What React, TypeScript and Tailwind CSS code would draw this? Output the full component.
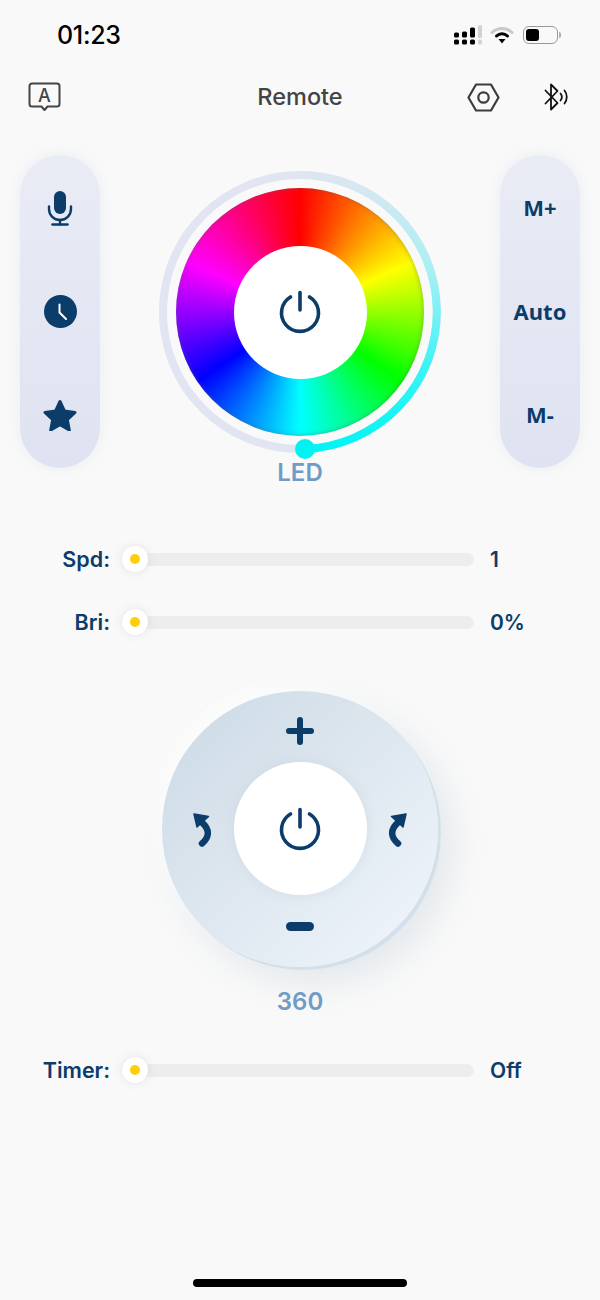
const NAVY = '#0b3c6a'

function PowerIcon() {
  return (
    <svg width="44" height="44" viewBox="0 0 44 44" fill="none" stroke={NAVY} strokeWidth="3.6" strokeLinecap="round">
      <path d="M12.500 7A18.500 18.500 0 1 0 31.500 7" />
      <path d="M22 2.500v17.500" />
    </svg>
  )
}

function SliderRow({ label, value }: { label: string; value: string }) {
  return (
    <div className="flex h-[26px] items-center">
      <span className="w-[110px] pt-[1px] text-right text-[21.5px] font-semibold text-[#0b3c6a]">{label}</span>
      <div className="relative z-10 ml-3 flex h-[26px] w-[26px] items-center justify-center rounded-full bg-white shadow-[0_0_8px_rgba(120,130,150,0.18)]">
        <div className="h-[10px] w-[10px] rounded-full bg-[#ffcf0a]" />
      </div>
      <div className="-ml-[13px] h-[13px] w-[339px] rounded-full bg-[#ebedee]" />
      <span className="ml-4 pt-[1px] text-[21px] font-semibold text-[#0b3c6a]">{value}</span>
    </div>
  )
}

function StatusIcons() {
  return (
    <div className="mr-[39px] flex items-center">
      <svg width="29" height="20" viewBox="0 0 29 20" fill="#000">
        <rect x="0" y="14.5" width="5" height="5" rx="1.6" />
        <rect x="8" y="14.5" width="5" height="5" rx="1.6" />
        <rect x="16" y="14.5" width="5" height="5" rx="1.6" />
        <rect x="0" y="7.5" width="5" height="5" rx="1.6" />
        <rect x="8" y="6.5" width="5" height="6" rx="1.6" />
        <rect x="16" y="2.5" width="5" height="10" rx="1.6" />
        <rect x="24" y="0" width="4" height="13" rx="1.6" fill="#d2d2d2" />
        <rect x="24" y="14.5" width="4" height="5" rx="1.6" fill="#d2d2d2" />
      </svg>
      <svg className="ml-[7px]" width="24" height="18" viewBox="0 0 24 18" fill="none" strokeLinecap="round">
        <path d="M2 6.5C7.5 1 16.5 1 22 6.5" stroke="#c9c9c9" strokeWidth="3" />
        <path d="M6.5 10C9.6 7 14.4 7 17.5 10" stroke="#000" strokeWidth="3" />
        <path d="M8.5 13h7L12 17.5z" fill="#000" />
      </svg>
      <div className="ml-[9px] flex items-center">
        <div className="flex h-[18px] w-[35px] items-center rounded-[6px] border border-[#9a9a9a] p-[2px]">
          <div className="h-full w-[13px] rounded-[3px] bg-black" />
        </div>
        <div className="ml-[1px] h-[6px] w-[2px] rounded-r-full bg-[#b0b0b0]" />
      </div>
    </div>
  )
}

function MessageIcon() {
  return (
    <svg width="33" height="30" viewBox="0 0 33 30" fill="none" stroke="#444" strokeWidth="2" strokeLinejoin="round" strokeLinecap="round">
      <path d="M4 1.5h25a2.5 2.5 0 0 1 2.5 2.5v18a2.5 2.5 0 0 1-2.5 2.5h-9.5l-3 3.5-3-3.5H4A2.5 2.5 0 0 1 1.5 22V4A2.5 2.5 0 0 1 4 1.5z" />
      <text x="16.5" y="19.5" textAnchor="middle" fontSize="18" fontFamily="Inter, sans-serif" fontWeight="500" fill="#444" stroke="none">A</text>
    </svg>
  )
}

function HexIcon() {
  return (
    <svg width="33" height="29" viewBox="0 0 33 29" fill="none" stroke="#3c3c3c" strokeWidth="2.2" strokeLinejoin="round">
      <path d="M9 1.5h15l7.5 13-7.5 13H9l-7.5-13z" />
      <circle cx="16.5" cy="14.5" r="5.2" />
    </svg>
  )
}

function BluetoothIcon() {
  return (
    <svg width="25" height="28" viewBox="0 0 25 28" fill="none" stroke="#111" strokeWidth="1.8" strokeLinejoin="round" strokeLinecap="round">
      <path d="M1.5 7.5L13.5 20 7 26.5V1.5L13.5 8 1.5 20.5" />
      <path d="M16.5 10.5c1.6 2 1.6 5 0 7" />
      <path d="M20.5 7.5c3 3.5 3 9.500 0 13" />
    </svg>
  )
}

function MicIcon() {
  return (
    <svg width="26" height="35" viewBox="0 0 26 35" fill="none" stroke={NAVY} strokeWidth="2.4" strokeLinecap="round">
      <rect x="7" y="0" width="12" height="23" rx="6" fill={NAVY} stroke="none" />
      <path d="M2 15.500v2.500a11 11 0 0 0 22 0v-2.500" />
      <path d="M13 29v4.500" />
      <path d="M5.500 33.500h15" strokeWidth="2.600" />
    </svg>
  )
}

function ClockIcon() {
  return (
    <svg width="33" height="33" viewBox="0 0 33 33" fill="none">
      <circle cx="16.500" cy="16.500" r="16.500" fill={NAVY} />
      <path d="M15.500 9.500v8l6.500 6.500" stroke="#fff" strokeWidth="2" strokeLinecap="round" strokeLinejoin="round" />
    </svg>
  )
}

function StarIcon() {
  return (
    <svg width="34" height="32" viewBox="0 0 34 32">
      <path
        d="M17 2.500l4.500 9.600 10.500 1.300-7.700 7.200 2 10.400-9.300-5.200-9.300 5.200 2-10.400L2 13.400l10.500-1.300z"
        fill={NAVY}
        stroke={NAVY}
        strokeWidth="3"
        strokeLinejoin="round"
      />
    </svg>
  )
}

function RotateLeft() {
  return (
    <svg width="22" height="36" viewBox="0 0 22 36" fill="none">
      <path d="M9 32.500c7-6 8.500-13.500 0-21" stroke={NAVY} strokeWidth="6.500" strokeLinecap="round" />
      <path d="M1 3l14.500 2.500L4 16z" fill={NAVY} stroke={NAVY} strokeWidth="1.500" strokeLinejoin="round" />
    </svg>
  )
}

function ColorWheel() {
  return (
    <div className="relative flex h-[288px] w-[282px] items-start justify-center">
      <svg className="absolute left-0 top-0" width="292" height="292" viewBox="0 0 292 292" fill="none">
        <defs>
          <linearGradient id="ringFade" x1="0" y1="0" x2="0" y2="1">
            <stop offset="0" stopColor="#dde6f0" />
            <stop offset="0.35" stopColor="#a8f0f4" />
            <stop offset="0.7" stopColor="#3cf3f5" />
            <stop offset="1" stopColor="#00f5f5" />
          </linearGradient>
        </defs>
        <circle cx="141" cy="141" r="137" stroke="#e1e4f1" strokeWidth="8" />
        <path d="M141 4a137 137 0 0 1 5 273.900" stroke="url(#ringFade)" strokeWidth="8" />
        <circle cx="146" cy="278" r="10" fill="#00f2f2" />
      </svg>
      <div className="mt-[17px] flex h-[248px] w-[248px] items-center justify-center rounded-full bg-[conic-gradient(#ff0000,#ffff00_66deg,#00ff00_124deg,#00ffff_180deg,#0000ff_236deg,#ff00ff_294deg,#ff0000)] shadow-[inset_0_0_5px_rgba(90,90,90,0.45)]">
        <div className="flex h-[133px] w-[133px] items-center justify-center rounded-full bg-white">
          <PowerIcon />
        </div>
      </div>
    </div>
  )
}

export default function App() {
  return (
    <div className="flex h-[1300px] w-[600px] flex-col overflow-hidden bg-[#f9f9f9] font-['Inter',sans-serif]">
      {/* Status bar */}
      <div className="flex h-[70px] items-center justify-between pl-[57px]">
        <span className="pt-[2px] text-[25px] font-medium tracking-[-0.3px] text-black">01:23</span>
        <StatusIcons />
      </div>

      {/* Nav */}
      <div className="flex h-[54px] items-center">
        <div className="flex w-1/3 pl-[28px]">
          <MessageIcon />
        </div>
        <div className="w-1/3 text-center text-[23.5px] font-medium text-[#444]">Remote</div>
        <div className="flex w-1/3 items-center justify-end gap-[44px] pr-[31px]">
          <HexIcon />
          <BluetoothIcon />
        </div>
      </div>

      {/* Color controls */}
      <div className="mt-[31px] flex items-start justify-between px-5">
        <div className="flex h-[313px] w-20 flex-col items-center justify-between rounded-full bg-gradient-to-b from-[#e9ecf5] to-[#dfe3f1] py-[33px] shadow-[0_0_14px_rgba(210,215,230,0.35)]">
          <div className="flex h-10 items-center">
            <MicIcon />
          </div>
          <div className="flex h-10 items-center">
            <ClockIcon />
          </div>
          <div className="flex h-10 items-center">
            <StarIcon />
          </div>
        </div>
        <div className="mt-4 flex flex-col items-center">
          <ColorWheel />
          <div className="h-7 text-[24px] font-semibold leading-7 text-[#6f9bc5]">LED</div>
        </div>
        <div className="flex h-[313px] w-20 flex-col items-center justify-between rounded-full bg-gradient-to-b from-[#e9ecf5] to-[#dfe3f1] pb-[39px] pt-[37px] font-['Noto_Sans',sans-serif] text-[22px] font-bold leading-[30px] text-[#0b3c6a] shadow-[0_0_14px_rgba(210,215,230,0.35)]">
          <span>M+</span>
          <span>Auto</span>
          <span>M-</span>
        </div>
      </div>

      {/* Sliders */}
      <div className="mt-[59px] flex flex-col gap-[37px]">
        <SliderRow label="Spd:" value="1" />
        <SliderRow label="Bri:" value="0%" />
      </div>

      {/* 360 dial */}
      <div className="mt-[56px] flex flex-col items-center">
        <div className="flex h-[276px] w-[276px] flex-col items-center rounded-full bg-gradient-to-br from-[#cbd9e4] to-[#f1f6fc] pt-[26px] shadow-[3px_3px_0_#d3e0e9,14px_16px_36px_rgba(170,185,200,0.28),-6px_-6px_16px_rgba(255,255,255,0.8)]">
          <svg width="28" height="28" viewBox="0 0 28 28" stroke={NAVY} strokeWidth="6" strokeLinecap="round">
            <path d="M3 14h22M14 3v22" />
          </svg>
          <div className="mt-[17px] flex w-full items-center justify-between px-[31px]">
            <RotateLeft />
            <div className="flex h-[133px] w-[133px] items-center justify-center rounded-full bg-white shadow-[0_0_12px_rgba(190,200,210,0.35)]">
              <PowerIcon />
            </div>
            <div className="-scale-x-100">
              <RotateLeft />
            </div>
          </div>
          <div className="mt-[27px] h-[9px] w-[28px] rounded-full bg-[#0b3c6a]" />
        </div>
        <div className="mt-[21px] h-7 text-[24px] font-semibold leading-7 text-[#6f9bc5]">360</div>
      </div>

      <div className="mt-[41px]">
        <SliderRow label="Timer:" value="Off" />
      </div>

      {/* Home indicator */}
      <div className="mb-[13px] mt-auto flex justify-center">
        <div className="h-2 w-[214px] rounded-full bg-black" />
      </div>
    </div>
  )
}
